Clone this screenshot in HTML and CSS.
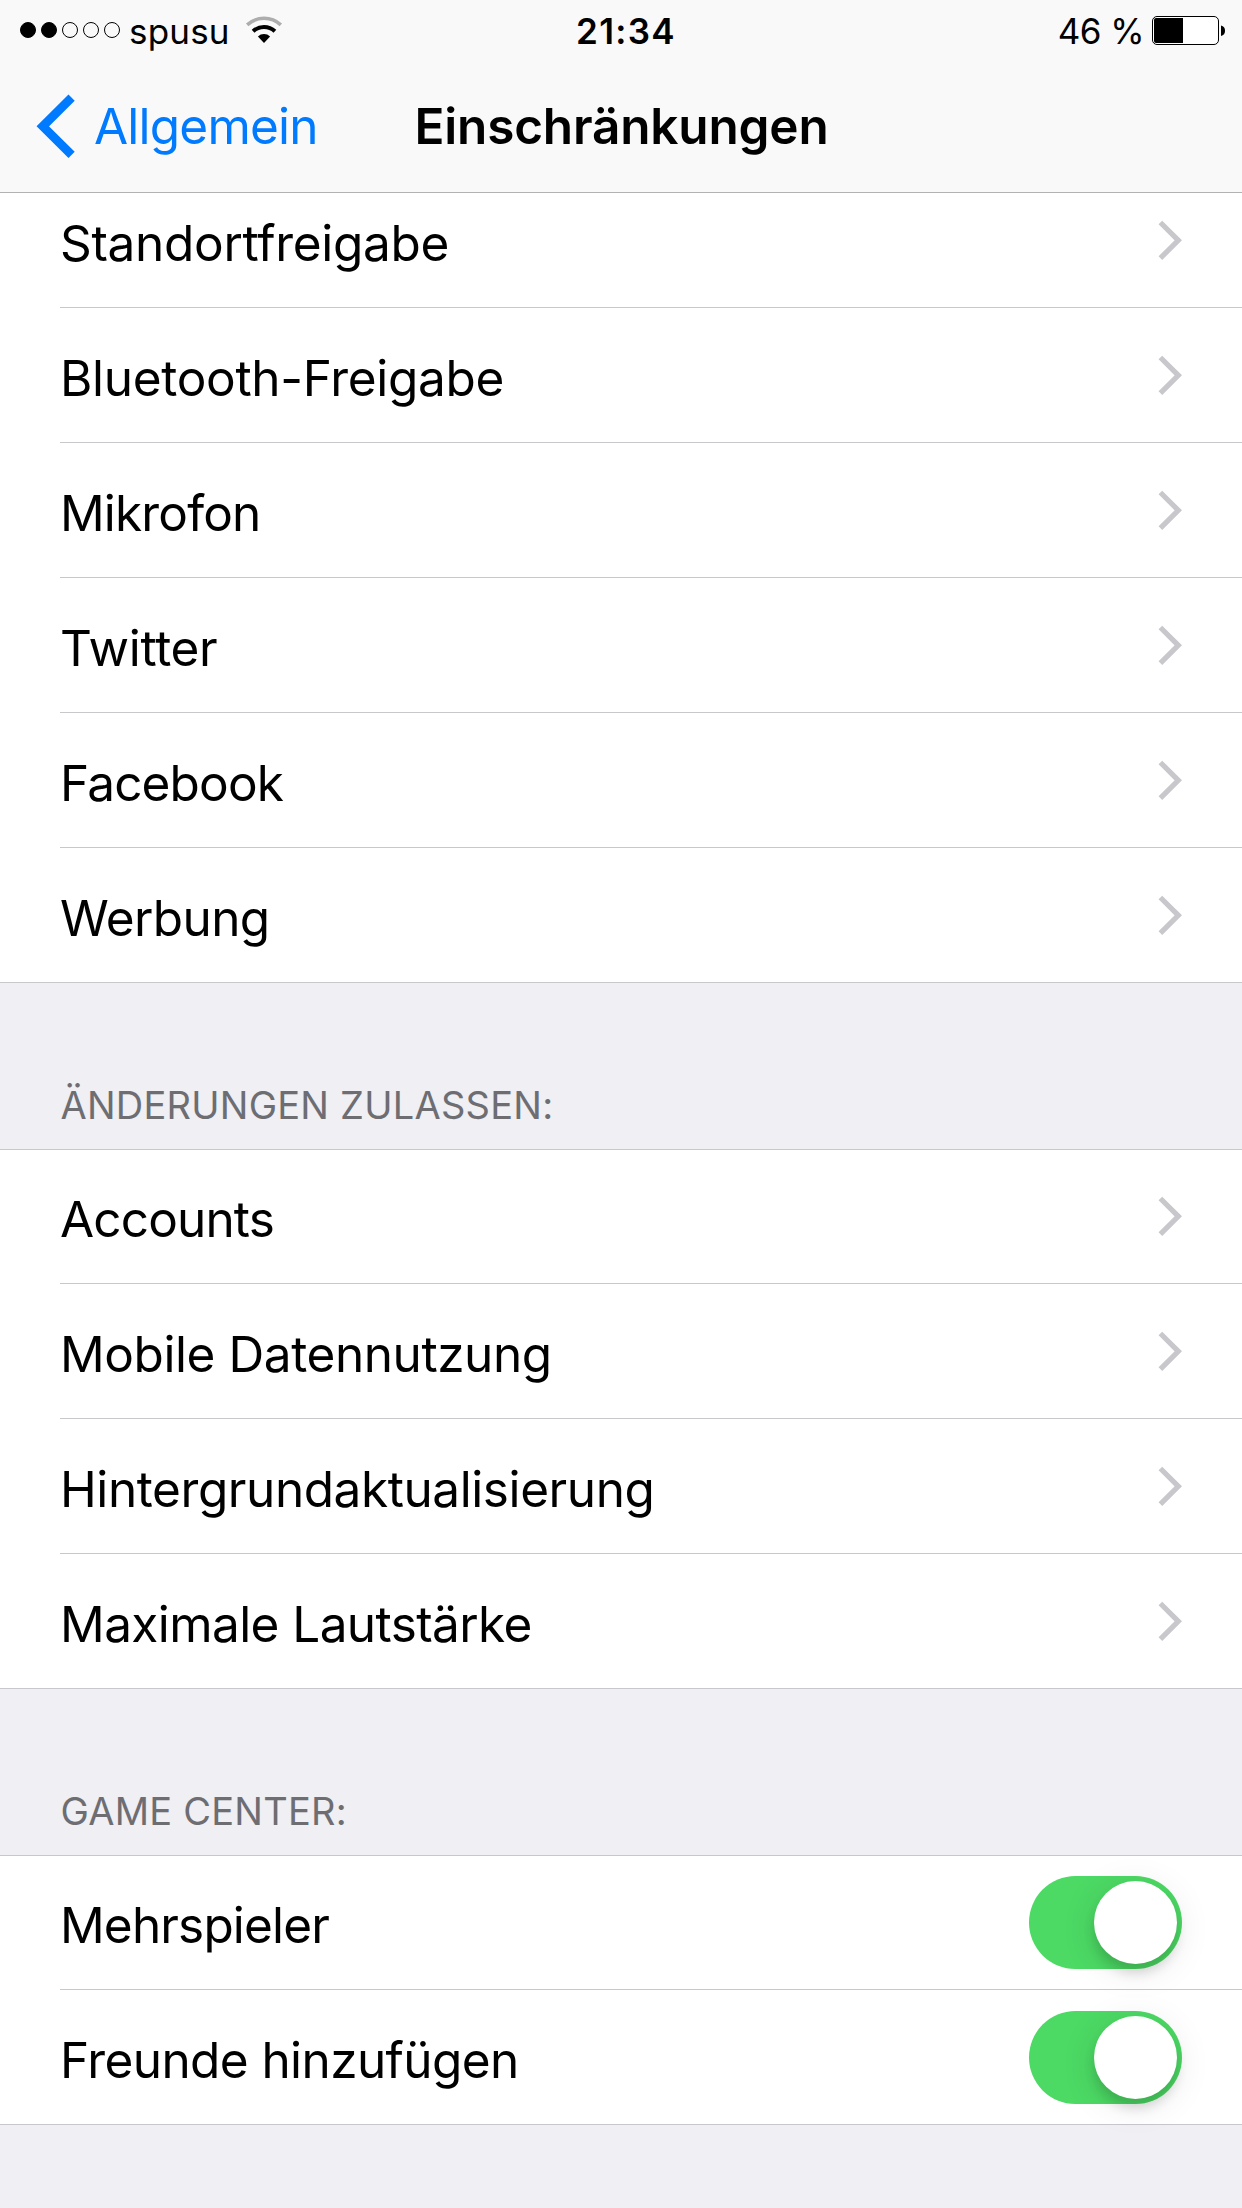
FILE: index.html
```html
<!DOCTYPE html>
<html lang="de">
<head>
<meta charset="utf-8">
<title>Einschränkungen</title>
<link rel="stylesheet" href="styles.css">
</head>
<body>
<svg class="defs" aria-hidden="true">
  <symbol id="chevron" viewBox="0 0 25 40"><path d="M2.4 2.5 20.3 20.3 2.4 38.1" fill="none" stroke="#c7c7cc" stroke-width="5.2"/></symbol>
</svg>
<header class="header">
  <div class="status">
    <div class="status-left">
      <div class="signal"><i class="dot full"></i><i class="dot full"></i><i class="dot"></i><i class="dot"></i><i class="dot"></i></div>
      <span class="carrier">spusu</span>
      <svg class="wifi" viewBox="0 0 38 28" fill="none">
        <path d="M2.2 8.9A24.7 24.7 0 0 1 35.8 8.9" stroke="#adadad" stroke-width="3.6"/>
        <path d="M8.1 15.3A16 16 0 0 1 29.9 15.3" stroke="#000" stroke-width="4"/>
        <path d="M19 27 12.9 20.4A9 9 0 0 1 25.1 20.4Z" fill="#000"/>
      </svg>
    </div>
    <span class="time">21:34</span>
    <div class="status-right">
      <span class="percent">46 %</span>
      <svg class="battery" viewBox="0 0 73 29">
        <rect x=".5" y=".5" width="66" height="28" rx="4.5" fill="#fff" stroke="#000"/>
        <path d="M4 2H31V27H4Q2 27 2 25V4Q2 2 4 2Z"/>
        <path d="M69 9.6Q73 10.5 73 14.8T69 20Z"/>
      </svg>
    </div>
  </div>
  <nav class="nav">
    <a class="back">
      <svg class="back-icon" viewBox="0 0 39 64"><path d="M35.6 3.7 6.8 32.3 35.6 60.9" fill="none" stroke="#007aff" stroke-width="8.8"/></svg>
      <span class="back-label">Allgemein</span>
    </a>
    <h1 class="title">Einschränkungen</h1>
  </nav>
</header>
<main>
  <ul class="group privacy">
    <li class="row"><span class="label loose">Standortfreigabe</span><svg class="chevron"><use href="#chevron"/></svg></li>
    <li class="row"><span class="label loose">Bluetooth-Freigabe</span><svg class="chevron"><use href="#chevron"/></svg></li>
    <li class="row"><span class="label tight">Mikrofon</span><svg class="chevron"><use href="#chevron"/></svg></li>
    <li class="row"><span class="label loose">Twitter</span><svg class="chevron"><use href="#chevron"/></svg></li>
    <li class="row"><span class="label tight">Facebook</span><svg class="chevron"><use href="#chevron"/></svg></li>
    <li class="row"><span class="label">Werbung</span><svg class="chevron"><use href="#chevron"/></svg></li>
  </ul>
  <h2 class="section">ÄNDERUNGEN ZULASSEN:</h2>
  <ul class="group">
    <li class="row"><span class="label tight">Accounts</span><svg class="chevron"><use href="#chevron"/></svg></li>
    <li class="row"><span class="label medium">Mobile Datennutzung</span><svg class="chevron"><use href="#chevron"/></svg></li>
    <li class="row"><span class="label medium">Hintergrundaktualisierung</span><svg class="chevron"><use href="#chevron"/></svg></li>
    <li class="row"><span class="label">Maximale Lautstärke</span><svg class="chevron"><use href="#chevron"/></svg></li>
  </ul>
  <h2 class="section">GAME CENTER:</h2>
  <ul class="group">
    <li class="row"><span class="label tight">Mehrspieler</span><span class="switch"><i class="knob"></i></span></li>
    <li class="row"><span class="label">Freunde hinzufügen</span><span class="switch"><i class="knob"></i></span></li>
  </ul>
</main>
</body>
</html>
```
FILE: styles.css
```css
* { box-sizing: border-box; }
body {
  margin: 0;
  height: 2208px;
  overflow: hidden;
  background: #efeff4;
  color: #000;
  font: 400 49.5px/60px Inter, "Liberation Sans", sans-serif;
}
svg { display: block; flex: none; }
.defs { width: 0; height: 0; position: absolute; }

/* Status and navigation bars, above the scrolled list */
.header {
  position: relative;
  z-index: 1;
  height: 193px;
  background: #f9f9f9;
  border-bottom: 1px solid #b2b2b2;
}
.status {
  display: grid;
  grid-template-columns: 1fr auto 1fr;
  align-items: center;
  height: 60px;
  padding: 0 17px 0 20px;
  font-size: 35px;
  line-height: 42px;
}
.status-left, .status-right { display: flex; align-items: center; }
.status-right { justify-content: flex-end; }
.signal { display: flex; gap: 5px; }
.dot { width: 16px; height: 16px; border: 1px solid #000; border-radius: 50%; }
.full { background: #000; }
.carrier { margin-left: 9px; padding-top: 2px; letter-spacing: .2px; }
.wifi { width: 38px; height: 28px; margin-left: 15.3px; }
.time { padding: 2px 0 0 7px; font-weight: 600; letter-spacing: 1.3px; }
.percent { padding-top: 2px; margin-right: 8px; letter-spacing: -.6px; }
.battery { width: 73px; height: 29px; margin-top: 1px; }
.nav {
  display: grid;
  grid-template-columns: 1fr auto 1fr;
  align-items: center;
  height: 132px;
  padding-left: 1px;
}
.back { display: flex; align-items: center; color: #007aff; padding-left: 35px; }
.back-icon { width: 39px; height: 64px; }
.back-label { margin-left: 19px; letter-spacing: -.78px; }
.title { margin: 0; font-size: 49.5px; font-weight: 600; letter-spacing: -.18px; }

/* Grouped list */
.group {
  margin: 0;
  padding: 0 0 0 60px;
  list-style: none;
  background: #fff;
  border-bottom: 1px solid #c8c7cc;
}
.privacy { margin-top: -20px; }
.row {
  display: flex;
  align-items: center;
  justify-content: space-between;
  height: 135px;
  padding-right: 60px;
  border-bottom: 1px solid #c8c7cc;
}
.section + .group .row:first-child { height: 134px; }
.section + .group .row:first-child .label { padding-top: 5px; }
.section + .group .row:first-child .chevron { margin-bottom: 1px; }
.row:last-child { height: 134px; border-bottom: 0; }
.label { padding-top: 6px; letter-spacing: -.58px; }
.label.loose { letter-spacing: -.3px; }
.label.medium { letter-spacing: -.42px; }
.label.tight { letter-spacing: -.84px; }
.chevron { width: 25px; height: 40px; margin-right: -1px; }
.section {
  height: 167px;
  margin: 0;
  padding: 99px 0 0 60.5px;
  border-bottom: 1px solid #c8c7cc;
  color: #6d6d72;
  font-size: 38px;
  font-weight: 400;
  line-height: 46px;
  letter-spacing: .24px;
}
.switch {
  display: flex;
  justify-content: flex-end;
  width: 153px;
  height: 93px;
  padding: 5px;
  border-radius: 46.5px;
  background: #4cd964;
}
.knob {
  width: 83px;
  height: 83px;
  border-radius: 50%;
  background: #fff;
  box-shadow: 0 9px 12px rgba(0, 0, 0, .14), 0 6px 36px rgba(0, 0, 0, .1);
}
```
